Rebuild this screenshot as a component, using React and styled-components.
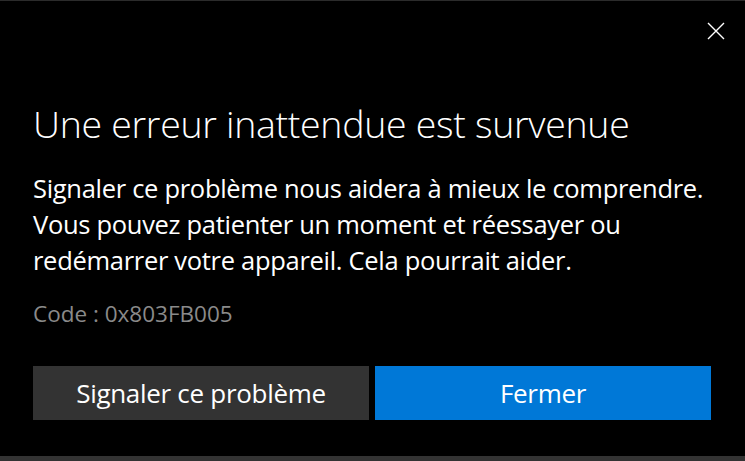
import React from 'react'
import styled, { createGlobalStyle } from 'styled-components'

const GlobalStyle = createGlobalStyle`
  html, body {
    margin: 0;
    padding: 0;
    background: #000;
  }
  body {
    font-family: 'Open Sans', 'Noto Sans', sans-serif;
    color: #fff;
  }
`

export default function App() {
  return (
    <>
      <GlobalStyle />
      <Dialog>
        <TopBar>
          <CloseButton aria-label="Fermer">
            <svg width="18" height="18" viewBox="0 0 18 18">
              <path d="M1 1 L17 17 M17 1 L1 17" stroke="#fff" strokeWidth="1.4" fill="none" />
            </svg>
          </CloseButton>
        </TopBar>
        <Content>
          <Title>Une erreur inattendue est survenue</Title>
          <Message>
            Signaler ce problème nous aidera à mieux le comprendre.
            <br />
            Vous pouvez patienter un moment et réessayer ou
            <br />
            redémarrer votre appareil. Cela pourrait aider.
          </Message>
          <Code>Code : 0x803FB005</Code>
          <Actions>
            <Button>Signaler ce problème</Button>
            <Button primary>Fermer</Button>
          </Actions>
        </Content>
      </Dialog>
    </>
  )
}

const Dialog = styled.div`
  box-sizing: border-box;
  height: 461px;
  border-top: 1px solid #2b2b2b;
  border-bottom: 5px solid #333;
  display: flex;
  flex-direction: column;
`

const TopBar = styled.div`
  display: flex;
  justify-content: flex-end;
  padding: 11px 19px 0 0;
`

const CloseButton = styled.button`
  width: 20px;
  height: 38px;
  border: none;
  background: transparent;
  padding: 0;
  display: flex;
  align-items: center;
  justify-content: center;
`

const Content = styled.div`
  padding: 50px 34px 0 33px;
  display: flex;
  flex-direction: column;
`

const Title = styled.h1`
  margin: 0;
  font-weight: 300;
  font-size: 37.5px;
  line-height: 48px;
  letter-spacing: -0.3px;
  color: #fff;
`

const Message = styled.p`
  margin: 22px 0 0;
  font-size: 25.5px;
  line-height: 36px;
  letter-spacing: -0.3px;
  color: #fff;
`

const Code = styled.div`
  margin-top: 21px;
  font-size: 22.5px;
  line-height: 30px;
  letter-spacing: 0;
  color: #8a8a8a;
`

const Actions = styled.div`
  display: grid;
  grid-template-columns: 1fr 1fr;
  gap: 6px;
  margin-top: 37px;
`

const Button = styled.button`
  height: 54px;
  border: none;
  padding: 0;
  font-family: 'Open Sans', 'Noto Sans', sans-serif;
  font-size: 26px;
  letter-spacing: -0.3px;
  color: #fff;
  background: ${p => (p.primary ? '#0078d7' : '#333333')};
`
